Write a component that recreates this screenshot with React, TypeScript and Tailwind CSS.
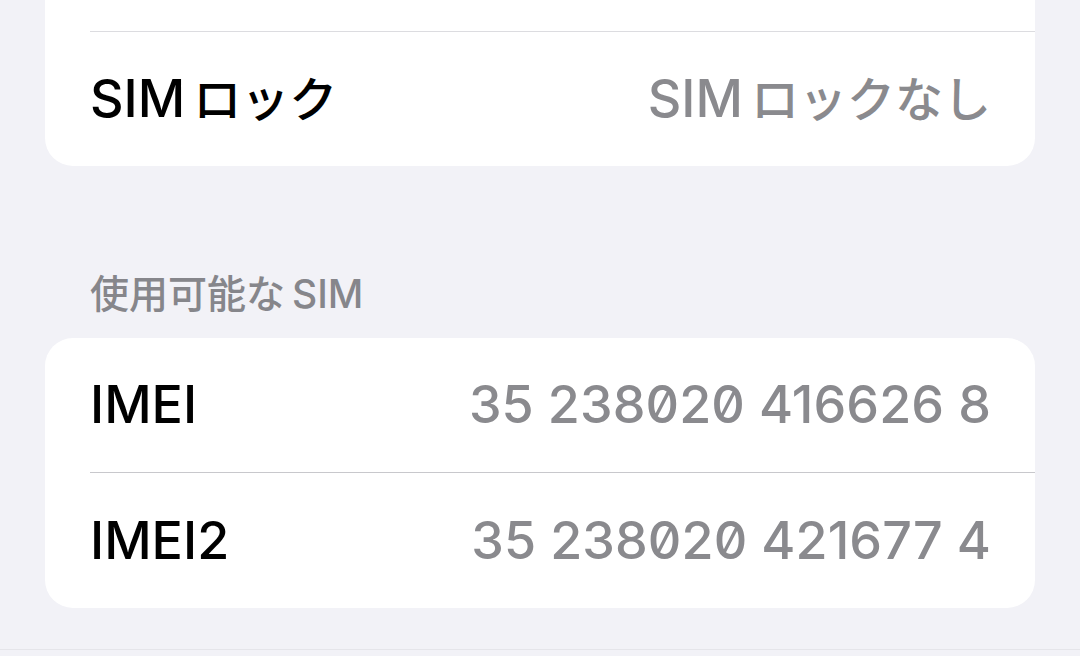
import React from "react";

const font = "font-['Inter','Noto_Sans_CJK_JP',sans-serif]";

function Row({ label, value, mono }: { label: React.ReactNode; value: React.ReactNode; mono?: boolean }) {
    return (
        <div className="flex items-center justify-between pl-[45px] pr-[44px]">
            <div className="text-[52px] font-medium text-black leading-none">{label}</div>
            <div
                className={`text-[52px] font-medium text-[#8a8a8e] leading-none ${mono ? "[font-feature-settings:'zero'_1] tracking-[0.1px]" : ""}`}
            >
                {value}
            </div>
        </div>
    );
}

export default function App() {
    return (
        <div className={`w-[1080px] h-[656px] bg-[#f2f2f7] overflow-hidden flex flex-col ${font}`}>
            {/* SIM lock card (scrolled, top cut off) */}
            <div className="mx-[45px] bg-white rounded-b-[28px]">
                <div className="h-[31px]" />
                <div className="ml-[45px] h-px bg-[#dcdce0]" />
                <div className="h-[134px] flex flex-col justify-center">
                    <Row
                        label={<>SIM<span className="ml-[8px] text-[48px]">ロック</span></>}
                        value={<>SIM<span className="ml-[8px] text-[48px]">ロックなし</span></>}
                    />
                </div>
            </div>

            {/* Section header */}
            <div className="pt-[104px] pb-[21px] pl-[90px] text-[39px] font-medium leading-[47px] text-[#86868b]">
                使用可能な<span className="ml-[7px]">SIM</span>
            </div>

            {/* IMEI card */}
            <div className="mx-[45px] bg-white rounded-[28px]">
                <div className="h-[134px] flex flex-col justify-center">
                    <Row label="IMEI" value="35 238020 416626 8" mono />
                </div>
                <div className="ml-[45px] h-px bg-[#c8c8cc]" />
                <div className="h-[135px] flex flex-col justify-center">
                    <Row label="IMEI2" value="35 238020 421677 4" mono />
                </div>
            </div>

            <div className="mt-[41px] h-px bg-[#e5e5ea]" />
        </div>
    );
}
